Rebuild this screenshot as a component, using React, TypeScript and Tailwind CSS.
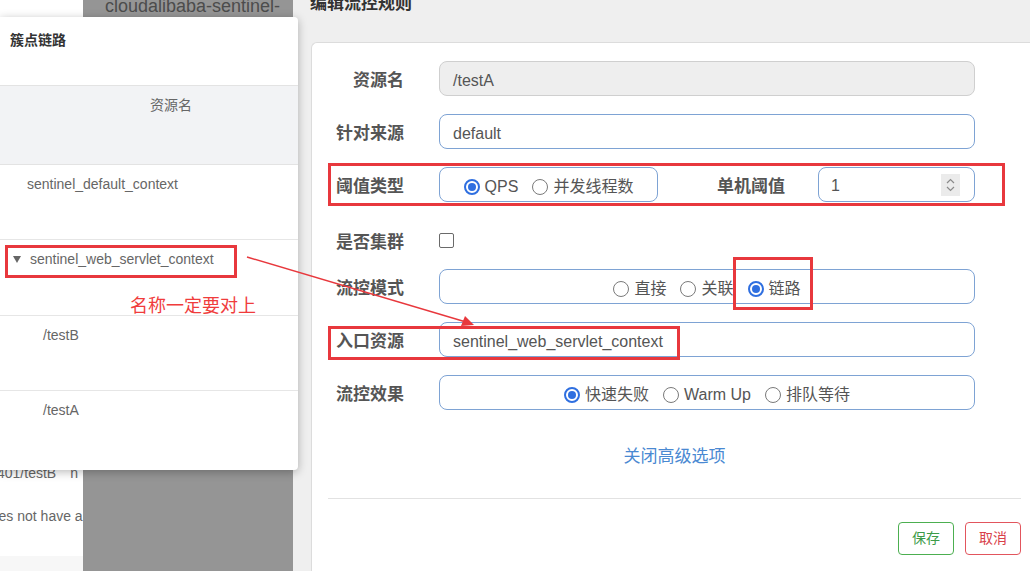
import { ReactNode } from "react";

const field = "h-[35px] rounded-[8px] border-[1.5px] border-[#7ea3d4] bg-white pt-[4px]";

function Radio({ checked, label }: { checked?: boolean; label: string }) {
  return (
    <span className="flex items-center gap-[5px]">
      {checked ? (
        <span className="w-[16px] h-[16px] rounded-full border-2 border-[#2f6fe0] flex items-center justify-center">
          <span className="w-[8px] h-[8px] rounded-full bg-[#2f6fe0]" />
        </span>
      ) : (
        <span className="w-[16px] h-[16px] rounded-full border-[1.5px] border-[#7a7a7a]" />
      )}
      <span>{label}</span>
    </span>
  );
}

function Row({ label, className, children }: { label: string; className?: string; children: ReactNode }) {
  return (
    <div className={"flex items-center " + (className ?? "")}>
      <div className="w-[76px] pt-[5px] text-right text-[17px] font-bold text-[#555] whitespace-nowrap">{label}</div>
      <div className="ml-[35px] w-[536px]">{children}</div>
    </div>
  );
}

function ClusterPanel() {
  const rowCls = "border-b border-[#e6e6e6] pt-[9px] leading-[20px] text-[14px] text-[#666]";
  return (
    <div className="absolute left-0 top-[17px] w-[298px] h-[453px] bg-white rounded-r-[4px] shadow-[0_2px_10px_rgba(0,0,0,0.28)] overflow-hidden">
      <div className="h-[68px] pt-[13px] pl-[10px] leading-[20px] text-[14px] font-bold text-[#333]">簇点链路</div>
      <div className="h-[80px] bg-[#f2f3f5] border-y border-[#e3e3e3] pt-[9px] pl-[150px] leading-[20px] text-[14px] text-[#666]">
        资源名
      </div>
      <div className={rowCls + " h-[75px] pl-[27px]"}>sentinel_default_context</div>
      <div className={rowCls + " h-[76px] pl-[13px] flex items-start gap-[9px]"}>
        <svg width="8" height="7" viewBox="0 0 8 7" className="mt-[7px]">
          <path d="M0 0 L8 0 L4 7 Z" fill="#666" />
        </svg>
        <span>sentinel_web_servlet_context</span>
      </div>
      <div className={rowCls + " h-[75px] pl-[43px]"}>/testB</div>
      <div className="pt-[9px] pl-[43px] leading-[20px] text-[14px] text-[#666]">/testA</div>
    </div>
  );
}

export default function App() {
  return (
    <div className="relative w-[1030px] h-[585px] overflow-hidden bg-white font-[family-name:'Liberation_Sans','Noto_Sans_CJK_SC',sans-serif]">
      <div className="flex h-[571px]">
        {/* page behind the dialogs */}
        <div className="w-[83px] flex flex-col overflow-hidden bg-white text-[14px] text-[#666]">
          <div className="flex-1 pt-[465px] whitespace-nowrap">
            <div className="leading-[16px] ml-[-3px]">
              401/testB<span className="ml-[14px]">n</span>
            </div>
            <div className="mt-[27px] leading-[16px] ml-[-17px]">does not have a</div>
          </div>
          <div className="h-[15px] bg-[#f7f7f7]" />
        </div>
        <div className="w-[210px] bg-[#959595] overflow-hidden">
          <div className="mt-[-6px] pl-[22px] leading-[24px] text-[18px] text-[#4c4c4c] whitespace-nowrap">
            cloudalibaba-sentinel-
          </div>
        </div>

        {/* edit flow rule dialog */}
        <div className="flex-1 flex flex-col bg-[#efefef]">
          <div className="h-[42px] pl-[17px] overflow-hidden">
            <div className="mt-[-8px] leading-[24px] text-[17px] font-bold text-[#333]">编辑流控规则</div>
          </div>
          <div className="flex-1 ml-[18px] bg-white border-l border-t border-[#dcdcdc] rounded-tl-[6px] pt-[18px] pl-[16px] pr-[9px] text-[16px] text-[#555]">
            <Row label="资源名" className="h-[35px]">
              <div className="h-[35px] rounded-[8px] border-[1.5px] border-[#cfcfcf] bg-[#eeeeee] flex items-center pl-[13px] pt-[4px]">
                /testA
              </div>
            </Row>
            <Row label="针对来源" className="h-[35px] mt-[18px]">
              <div className={field + " flex items-center pl-[13px] border-[#6f99d0]"}>default</div>
            </Row>
            <Row label="阈值类型" className="h-[35px] mt-[18px]">
              <div className="flex items-center">
                <div className={field + " w-[219px] flex items-center justify-center gap-[14px]"}>
                  <Radio checked label="QPS" />
                  <Radio label="并发线程数" />
                </div>
                <div className="flex-1 pt-[5px] text-right text-[17px] font-bold text-[#555]">单机阈值</div>
                <div className="ml-[33px] w-[157px] h-[35px] rounded-[8px] border-[1.5px] border-[#7ea3d4] bg-white flex items-center pl-[12px] pr-[14px]">
                  <span className="flex-1 pt-[3px]">1</span>
                  <span className="w-[19px] h-[22px] bg-[#ebebeb] flex flex-col items-center justify-center gap-[2px]">
                    <svg width="9" height="6" viewBox="0 0 9 6">
                      <path d="M1 5 L4.5 1.5 L8 5" fill="none" stroke="#8a8a8a" strokeWidth="1.2" />
                    </svg>
                    <svg width="9" height="6" viewBox="0 0 9 6">
                      <path d="M1 1 L4.5 4.5 L8 1" fill="none" stroke="#8a8a8a" strokeWidth="1.2" />
                    </svg>
                  </span>
                </div>
              </div>
            </Row>
            <Row label="是否集群" className="h-[32px] mt-[22px]">
              <div className="w-[15px] h-[15px] border-[1.5px] border-[#6a6a6a] rounded-[2px]" />
            </Row>
            <Row label="流控模式" className="h-[35px] mt-[13px]">
              <div className={field + " flex items-center justify-center gap-[14px]"}>
                <Radio label="直接" />
                <Radio label="关联" />
                <Radio checked label="链路" />
              </div>
            </Row>
            <Row label="入口资源" className="h-[35px] mt-[18px]">
              <div className={field + " flex items-center pl-[13px]"}>sentinel_web_servlet_context</div>
            </Row>
            <Row label="流控效果" className="h-[35px] mt-[18px]">
              <div className={field + " flex items-center justify-center gap-[14px]"}>
                <Radio checked label="快速失败" />
                <Radio label="Warm Up" />
                <Radio label="排队等待" />
              </div>
            </Row>
            <div className="mt-[35px] text-center leading-[24px] text-[17px] text-[#4a89d2]">关闭高级选项</div>
            <div className="mt-[29px] h-px bg-[#e2e2e2]" />
            <div className="mt-[23px] flex justify-end gap-[11px] text-[14px]">
              <button className="w-[56px] h-[33px] rounded-[4px] border border-[#4caf50] text-[#3c9b48] bg-white">
                保存
              </button>
              <button className="w-[56px] h-[33px] rounded-[4px] border border-[#e2555d] text-[#d9414a] bg-white">
                取消
              </button>
            </div>
          </div>
        </div>
      </div>

      <ClusterPanel />

      {/* red annotations drawn on the screenshot */}
      <div className="absolute left-[5px] top-[245px] w-[232px] h-[33px] border-[3px] border-[#e8383d]" />
      <div className="absolute left-[328px] top-[163px] w-[677px] h-[43px] border-[3px] border-[#e8383d]" />
      <div className="absolute left-[733px] top-[257px] w-[80px] h-[53px] border-[3px] border-[#e8383d]" />
      <div className="absolute left-[328px] top-[326px] w-[352px] h-[34px] border-[3px] border-[#e8383d]" />
      <div className="absolute left-[130px] top-[294px] leading-[24px] text-[18px] text-[#f03c3c] whitespace-nowrap">
        名称一定要对上
      </div>
      <svg className="absolute left-0 top-0 pointer-events-none" width="1030" height="585">
        <line x1="247" y1="257" x2="466" y2="322" stroke="#e8383d" strokeWidth="1.5" />
        <path d="M474 325 L461 326 L465 316 Z" fill="#e8383d" />
      </svg>
    </div>
  );
}
